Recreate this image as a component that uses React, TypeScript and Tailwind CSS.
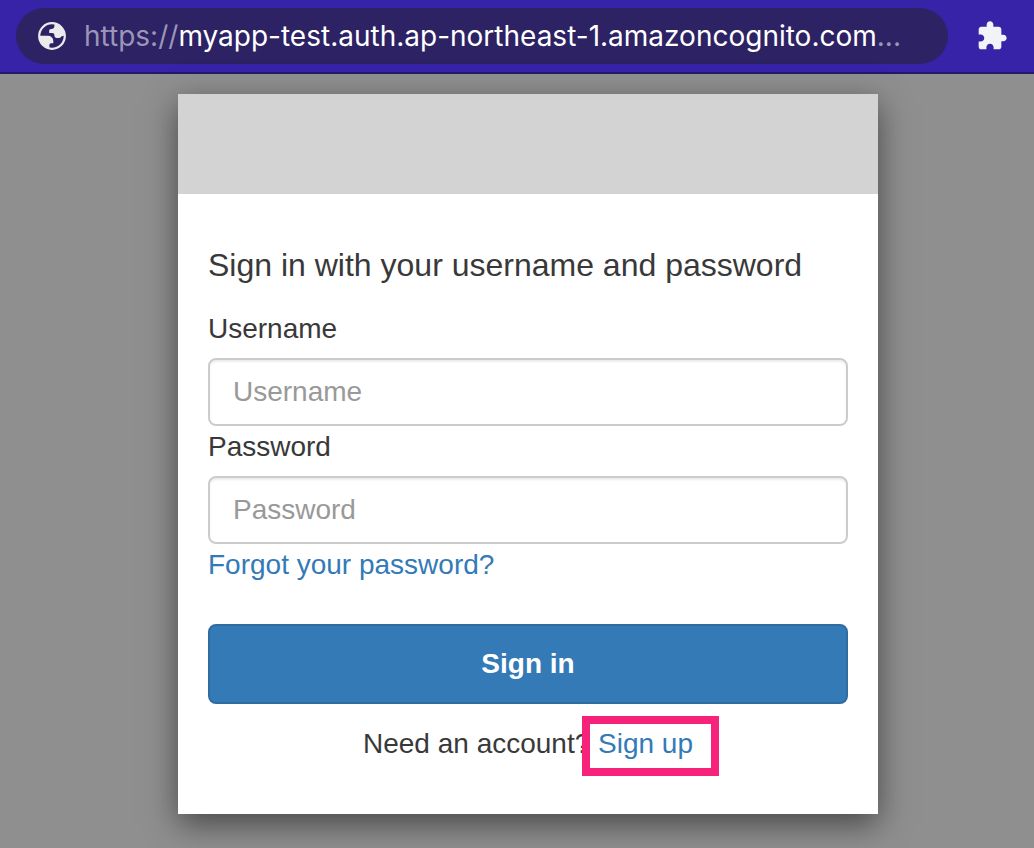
import React from "react";

function GlobeIcon() {
  return (
    <svg viewBox="0 0 28 28" className="size-7 shrink-0" aria-hidden="true">
      <circle cx="14" cy="14" r="12.8" fill="none" stroke="#ebebed" strokeWidth="2.2" />
      <path
        fill="#ebebed"
        d="M16.4 1.6V4C16.4 5.8 15.4 6.9 13.6 6.9H13C11.8 6.9 11.2 7.6 11.2 8.7V11H14.2C15.6 11 16.4 11.8 16.4 13V13.6C16.4 15 17.3 15.9 18.8 15.9H21.2C22.2 15.9 22.9 15.4 23.2 14.6L26.5 13.6A12.7 12.7 0 0 0 16.4 1.6ZM1.4 13.8H9.4C12.9 13.8 15.3 15.8 15.3 19V21.2H13.2C12 21.2 11.4 21.9 11.4 23V26.4A12.7 12.7 0 0 1 1.4 13.8Z"
      />
    </svg>
  );
}

function PuzzleIcon() {
  return (
    <svg viewBox="0 0 24 24" className="size-8" fill="#f1f3f6" aria-hidden="true">
      <path d="M20.5 11H19V7c0-1.1-.9-2-2-2h-4V3.5C13 2.12 11.88 1 10.5 1S8 2.12 8 3.5V5H4c-1.1 0-1.99.9-1.99 2v3.8H3.5c1.49 0 2.7 1.21 2.7 2.7s-1.21 2.7-2.7 2.7H2V20c0 1.1.9 2 2 2h3.8v-1.5c0-1.49 1.21-2.7 2.7-2.7s2.7 1.21 2.7 2.7V22H17c1.1 0 2-.9 2-2v-4h1.5c1.38 0 2.5-1.12 2.5-2.5S21.88 11 20.5 11z" />
    </svg>
  );
}

function Field({ id, label, type }: { id: string; label: string; type: string }) {
  return (
    <div>
      <label htmlFor={id} className="block pb-2 leading-[42px]">
        {label}
      </label>
      <input
        id={id}
        type={type}
        placeholder={label}
        className="block h-[68px] w-full rounded-lg border-2 border-[#ccc] bg-white px-[23px] shadow-[inset_0_2px_2px_rgba(0,0,0,0.075)] placeholder:text-[#999]"
      />
    </div>
  );
}

export default function App() {
  return (
    <div className="flex min-h-screen flex-col bg-[#8f8f8f]">
      <header className="flex h-[74px] items-center gap-7 border-b-2 border-[#23186d] bg-[#3623a8] pr-[26px] pl-4">
        <div className="flex h-14 min-w-0 flex-1 items-center gap-[18px] rounded-full bg-[#2c2264] pr-8 pl-[22px] font-[Inter,sans-serif] text-[28px]">
          <GlobeIcon />
          <div className="whitespace-nowrap text-white">
            <span className="text-[#9b96b8]">https://</span>
            myapp-test.auth.ap-northeast-1.amazoncognito.com
            <span className="text-[#9b96b8]">...</span>
          </div>
        </div>
        <button type="button" aria-label="Extensions">
          <PuzzleIcon />
        </button>
      </header>

      <main className="flex flex-1 justify-center pt-5 pb-[34px] pl-[22px] font-['Liberation_Sans',Arial,sans-serif] text-[28px] text-[#393939]">
        <div className="w-full max-w-[700px] self-start bg-white shadow-[0_10px_30px_rgba(0,0,0,0.5)]">
          <div className="h-[100px] bg-[#d3d3d3]" />
          <form className="px-[30px] pt-12 pb-[50px]" onSubmit={(e) => e.preventDefault()}>
            <h1 className="pb-5 text-[32px] leading-[46px]">Sign in with your username and password</h1>
            <Field id="username" label="Username" type="text" />
            <Field id="password" label="Password" type="password" />
            <a href="#forgot" className="inline-block leading-10 text-[#337ab7]">
              Forgot your password?
            </a>
            <button
              type="submit"
              className="mt-[38px] block h-20 w-full rounded-lg border-2 border-[#2e6da4] bg-[#337ab7] font-bold text-white"
            >
              Sign in
            </button>
            <p className="pt-5 text-center leading-10">
              Need an account?{" "}
              <span className="relative inline-block">
                <a href="#signup" className="text-[#337ab7]">
                  Sign up
                </a>
                <span className="pointer-events-none absolute -top-2 -right-[26px] -bottom-3 -left-4 border-8 border-[#f7237b]" />
              </span>
            </p>
          </form>
        </div>
      </main>
    </div>
  );
}
